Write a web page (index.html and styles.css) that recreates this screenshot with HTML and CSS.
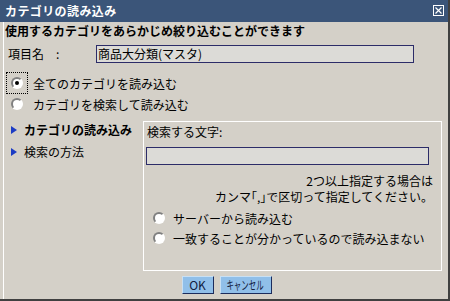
FILE: index.html
```html
<!DOCTYPE html>
<html lang="ja">
<head>
    <meta charset="UTF-8">
    <title>カテゴリの読み込み</title>
    <link rel="stylesheet" href="styles.css">
</head>
<body>
    <div class="window">
        <!-- Title bar -->
        <div class="titlebar">
            <span class="title">カテゴリの読み込み</span>
            <svg class="close" width="11" height="11" viewBox="0 0 11 11">
                <rect x="0.5" y="0.5" width="10" height="10" fill="none" stroke="#fff"/>
                <path d="M2.5 2.5 L8.5 8.5 M8.5 2.5 L2.5 8.5" stroke="#fff" stroke-width="1.2"/>
            </svg>
        </div>

        <div class="frame">
            <div class="content">
                <div class="lead">使用するカテゴリをあらかじめ絞り込むことができます</div>

                <div class="field">
                    <span class="label">項目名<span class="colon">:</span></span>
                    <div class="input">商品大分類(マスタ)</div>
                </div>

                <!-- Load mode -->
                <div class="options">
                    <div class="option">
                        <span class="focus"><span class="radio checked"></span></span>
                        <span>全てのカテゴリを読み込む</span>
                    </div>
                    <div class="option">
                        <span class="focus off"><span class="radio"></span></span>
                        <span>カテゴリを検索して読み込む</span>
                    </div>
                </div>

                <div class="section">
                    <ul class="nav">
                        <li class="active"><span class="arrow"></span>カテゴリの読み込み</li>
                        <li><span class="arrow"></span>検索の方法</li>
                    </ul>

                    <div class="panel">
                        <div class="panel-label">検索する文字:</div>
                        <div class="input wide"></div>
                        <div class="note">
                            <div>2つ以上指定する場合は</div>
                            <div>カンマ｢,｣で区切って指定してください。</div>
                        </div>
                        <div class="panel-options">
                            <div class="option small">
                                <span class="radio"></span>
                                <span>サーバーから読み込む</span>
                            </div>
                            <div class="option small">
                                <span class="radio"></span>
                                <span>一致することが分かっているので読み込まない</span>
                            </div>
                        </div>
                    </div>
                </div>

                <div class="buttons">
                    <button class="btn ok">OK</button>
                    <button class="btn"><span class="narrow">キャンセル</span></button>
                </div>
            </div>
        </div>
    </div>
</body>
</html>
```

FILE: styles.css
```css
body {
    margin: 0;
    padding: 0;
    font-family: "Noto Sans CJK JP", "Liberation Sans", sans-serif;
    font-size: 12px;
    color: #000000;
    background-color: #d4d0c8;
}

.window {
    width: 450px;
    height: 301px;
    box-sizing: border-box;
    border-right: 2px solid #404040;
    border-bottom: 2px solid #404040;
    background-color: #d4d0c8;
    display: flex;
    flex-direction: column;
}

.titlebar {
    height: 22px;
    background-color: #3b5579;
    color: #ffffff;
    display: flex;
    align-items: center;
    justify-content: space-between;
    padding: 0 4px 0 5px;
}

.title {
    font-weight: bold;
    font-size: 12px;
    letter-spacing: 0.4px;
    line-height: 16px;
}

.close {
    display: block;
    margin-top: -1px;
}

/* Body frame with the light left edge */
.frame {
    flex: 1;
    padding-left: 3px;
}

.content {
    height: 100%;
    border-left: 1px solid #ffffff;
    padding-left: 1px;
    box-sizing: border-box;
}

.lead {
    font-weight: bold;
    line-height: 14px;
    padding-top: 2px;
}

.field {
    display: flex;
    align-items: center;
    margin-top: 7px;
}

.label {
    width: 88px;
    padding-left: 3px;
    line-height: 18px;
}

.colon {
    margin-left: 12px;
}

.input {
    width: 318px;
    height: 18px;
    box-sizing: border-box;
    border: 1px solid #2c2c68;
    background-color: #dcdbd7;
    line-height: 16px;
    padding-left: 1px;
    white-space: nowrap;
}

/* Radio options */
.options {
    margin-top: 9px;
}

.option {
    display: flex;
    align-items: center;
    height: 20px;
}

.option:first-child {
    height: 22px;
}

.focus {
    display: inline-flex;
    align-items: center;
    justify-content: center;
    width: 22px;
    height: 22px;
    box-sizing: border-box;
    border: 1px dotted #000000;
    margin-left: 1px;
    margin-right: 5px;
}

.focus.off {
    border-color: transparent;
}

.radio {
    position: relative;
    display: inline-block;
    width: 8px;
    height: 8px;
    border: 2px solid;
    border-color: #808080 #ffffff #ffffff #808080;
    border-radius: 50%;
    background-color: #ffffff;
}

.radio.checked::after {
    content: "";
    position: absolute;
    top: 2px;
    left: 2px;
    width: 4px;
    height: 4px;
    border-radius: 50%;
    background-color: #000000;
}

/* Nav + panel */
.section {
    display: flex;
    margin-top: 7px;
}

.nav {
    list-style: none;
    margin: 0;
    padding: 0 0 0 6px;
    width: 132px;
}

.nav li {
    display: flex;
    align-items: center;
    line-height: 18px;
    margin-bottom: 4px;
}

.nav li.active {
    font-weight: bold;
}

.arrow {
    width: 0;
    height: 0;
    border-top: 4px solid transparent;
    border-bottom: 4px solid transparent;
    border-left: 6px solid #1c3cc4;
    margin-right: 7px;
}

.panel {
    width: 299px;
    height: 150px;
    box-sizing: border-box;
    border: 1px solid #ffffff;
    padding: 1px 8px 0 2px;
}

.panel-label {
    line-height: 18px;
    padding-left: 1px;
}

.input.wide {
    width: 283px;
    margin-top: 6px;
}

.note {
    text-align: right;
    line-height: 16px;
    margin-top: 8px;
}

.panel-options {
    margin-top: 3px;
    padding-left: 7px;
}

.option.small {
    height: 20px;
}

.option.small .radio {
    margin-right: 8px;
}

/* Buttons */
.buttons {
    display: flex;
    justify-content: center;
    gap: 6px;
    margin-top: 5px;
}

.btn {
    height: 18px;
    padding: 0;
    font-family: "Noto Sans CJK JP", "Liberation Sans", sans-serif;
    font-size: 12px;
    line-height: 14px;
    color: #102040;
    background-color: #90bfe9;
    border: 1px solid;
    border-color: #c8e0f4 #1c2c5c #1c2c5c #c8e0f4;
    width: 52px;
    overflow: hidden;
    white-space: nowrap;
}

.btn.ok {
    width: 32px;
}

.narrow {
    display: inline-block;
    transform: scaleX(0.62);
    margin: 0 -11px;
}
```
